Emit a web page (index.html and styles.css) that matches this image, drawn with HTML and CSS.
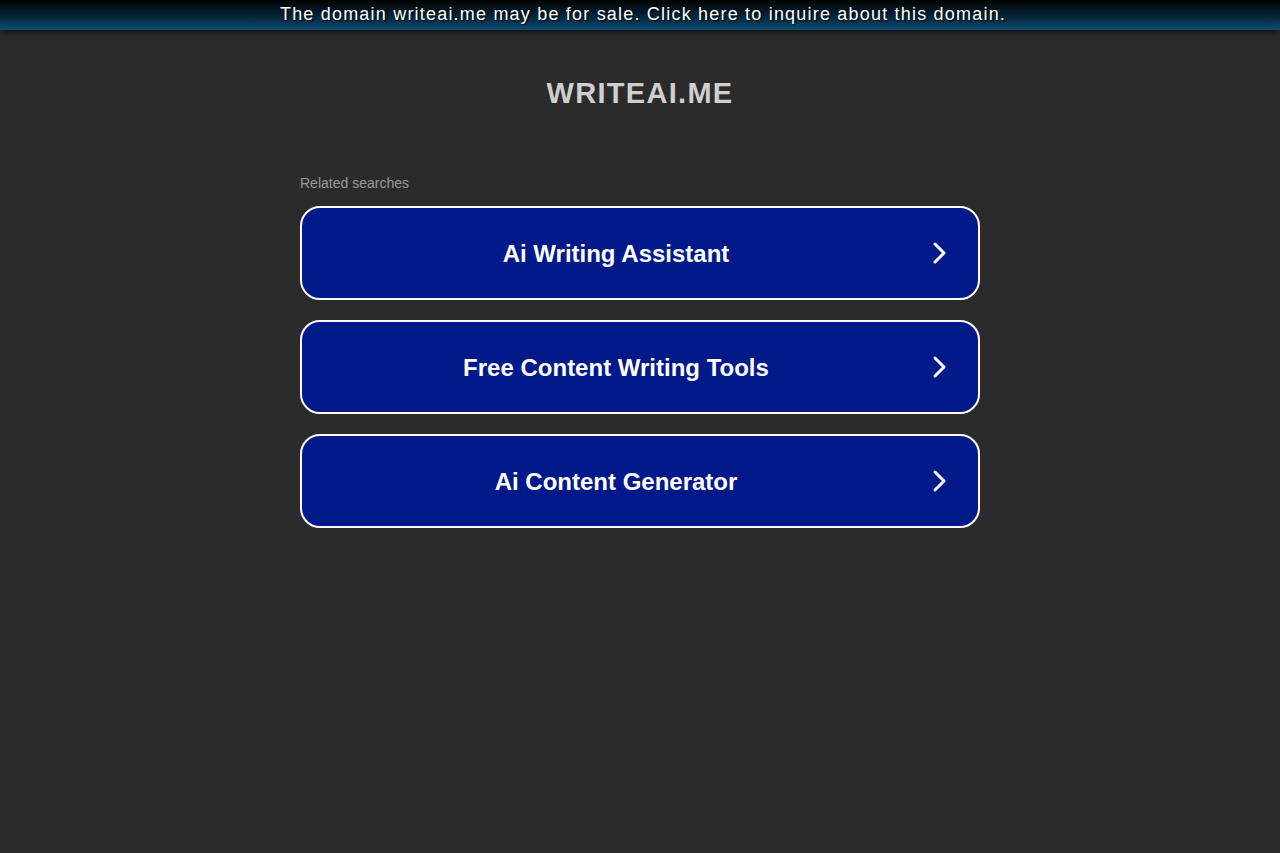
FILE: index.html
```html
<!DOCTYPE html>
<html>
<head>
<meta charset="utf-8">
<link rel="stylesheet" href="styles.css">
</head>
<body>
<div class="topbar">The domain writeai.me may be for sale. Click here to inquire about this domain.</div>
<h1 class="title">WRITEAI.ME</h1>
<div class="searches">
  <div class="label">Related searches</div>
  <a class="item" href="#"><span class="text">Ai Writing Assistant</span><svg class="arrow" viewBox="0 0 20 24" width="20" height="24"><path d="M5 3 L14 12 L5 21" fill="none" stroke="#fff" stroke-width="3" stroke-linecap="round" stroke-linejoin="round"/></svg></a>
  <a class="item" href="#"><span class="text">Free Content Writing Tools</span><svg class="arrow" viewBox="0 0 20 24" width="20" height="24"><path d="M5 3 L14 12 L5 21" fill="none" stroke="#fff" stroke-width="3" stroke-linecap="round" stroke-linejoin="round"/></svg></a>
  <a class="item" href="#"><span class="text">Ai Content Generator</span><svg class="arrow" viewBox="0 0 20 24" width="20" height="24"><path d="M5 3 L14 12 L5 21" fill="none" stroke="#fff" stroke-width="3" stroke-linecap="round" stroke-linejoin="round"/></svg></a>
</div>
</body>
</html>
```
FILE: styles.css
```css
html, body {
  margin: 0;
  padding: 0;
  background: #2b2b2b;
  font-family: "Liberation Sans", Arial, sans-serif;
}
.topbar {
  height: 30px;
  line-height: 28px;
  padding-left: 6px;
  text-align: center;
  color: #fff;
  font-size: 18px;
  letter-spacing: 1.2px;
  background: linear-gradient(to bottom, #000 0%, #05253a 55%, #0c4f73 100%);
  text-shadow: 1px 1px 2px #000;
  box-shadow: 0 2px 6px rgba(0,0,0,0.6);
}
.title {
  margin: 45px 0 0;
  text-align: center;
  font-size: 29px;
  line-height: 36px;
  font-weight: bold;
  letter-spacing: 1.3px;
  color: #cfcfcf;
}
.searches {
  width: 680px;
  margin: 64px auto 0;
  display: flex;
  flex-direction: column;
}
.label {
  font-size: 14px;
  color: #9a9a9a;
  line-height: 16px;
  margin-bottom: 15px;
}
.item {
  box-sizing: border-box;
  height: 94px;
  margin-bottom: 20px;
  border: 2px solid #fff;
  border-radius: 20px;
  background: #011989;
  display: flex;
  align-items: center;
  text-decoration: none;
  color: #fff;
  padding: 0 28px 0 0;
}
.text {
  flex: 1;
  text-align: center;
  font-size: 24px;
  font-weight: bold;
  padding-top: 2px;
}
.arrow {
  flex: none;
}
```
